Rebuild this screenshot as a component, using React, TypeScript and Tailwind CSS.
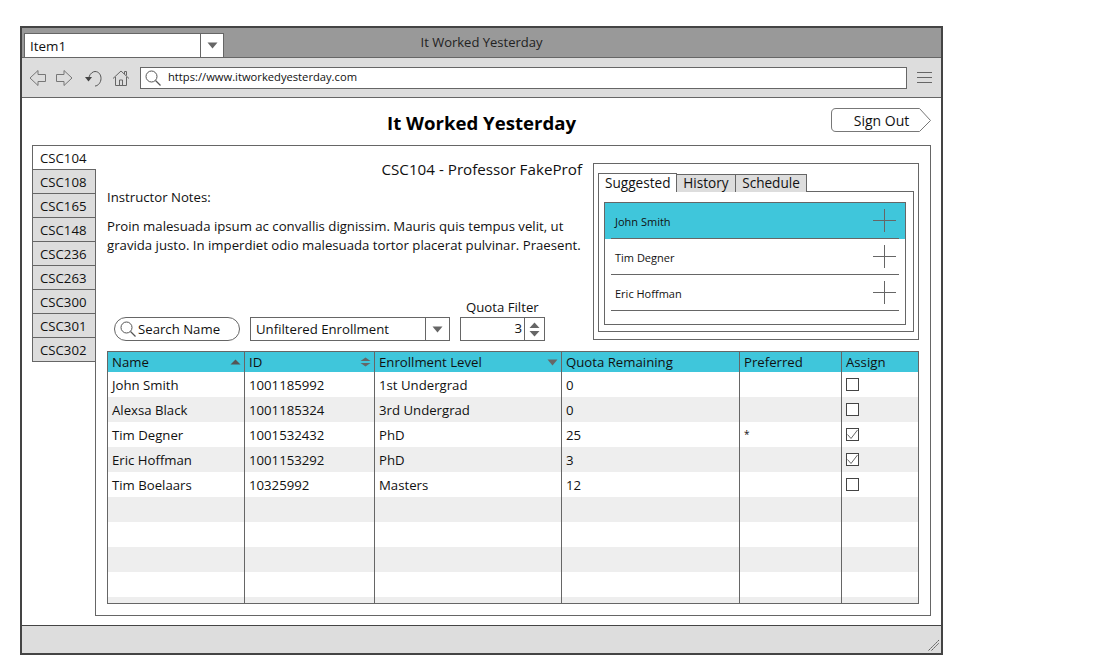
const cols = ["w-[137px]", "w-[130px]", "w-[187px]", "w-[178px]", "w-[102px]", "w-[76px]"];
type Row = [string, string, string, string, string, "" | "on" | "off"];
const rows: Row[] = [
  ["John Smith", "1001185992", "1st Undergrad", "0", "", "off"],
  ["Alexsa Black", "1001185324", "3rd Undergrad", "0", "", "off"],
  ["Tim Degner", "1001532432", "PhD", "25", "*", "on"],
  ["Eric Hoffman", "1001153292", "PhD", "3", "", "on"],
  ["Tim Boelaars", "10325992", "Masters", "12", "", "off"],
  ["", "", "", "", "", ""],
  ["", "", "", "", "", ""],
  ["", "", "", "", "", ""],
  ["", "", "", "", "", ""],
  ["", "", "", "", "", ""],
];
const courses = ["CSC108", "CSC165", "CSC148", "CSC236", "CSC263", "CSC300", "CSC301", "CSC302"];

function Caret({ className = "" }: { className?: string }) {
  return (
    <svg width="11" height="7" viewBox="0 0 11 7" className={className}>
      <path d="M0.5 0.5H10.5L5.5 6.5Z" fill="#666" />
    </svg>
  );
}

function Spinner() {
  return (
    <svg width="11" height="15" viewBox="0 0 11 15">
      <path d="M5.5 0.5L10.5 6H0.5Z" fill="#666" />
      <path d="M0.5 9H10.5L5.5 14.5Z" fill="#666" />
    </svg>
  );
}

function Plus() {
  return (
    <svg width="23" height="23" viewBox="0 0 23 23" className="shrink-0">
      <path d="M0 11.5H23M11.5 0V23" stroke="#666" strokeWidth="1" />
    </svg>
  );
}

function Check({ on }: { on: boolean }) {
  return (
    <svg width="13" height="13" viewBox="0 0 13 13" className="block">
      <rect x="0.5" y="0.5" width="12" height="12" fill="#fff" stroke="#444" />
      {on && <path d="M1.5 6.5L5 10.5L11.5 2" fill="none" stroke="#666" strokeWidth="1" />}
    </svg>
  );
}

function Glass({ size = 16 }: { size?: number }) {
  return (
    <svg width={size} height={size} viewBox="0 0 16 16" className="shrink-0">
      <circle cx="6.5" cy="6.5" r="5.5" fill="none" stroke="#555" />
      <path d="M10.5 10.5L15.5 15.5" stroke="#555" strokeWidth="1.2" />
    </svg>
  );
}

function NavIcons() {
  return (
    <div className="flex items-center ml-[7px] w-[111px] shrink-0">
      <svg width="18" height="18" viewBox="0 0 18 18" className="mr-[8px]">
        <path d="M1 9L9 1.5V5.5H16.5V12.5H9V16.5Z" fill="none" stroke="#777" />
      </svg>
      <svg width="18" height="18" viewBox="0 0 18 18" className="mr-[11px]">
        <path d="M17 9L9 1.5V5.5H1.5V12.5H9V16.5Z" fill="none" stroke="#777" />
      </svg>
      <svg width="18" height="18" viewBox="0 0 18 18" className="mr-[10px]">
        <path d="M5 8C6 4.5 9 2.5 11 2.5C15 2.5 17 6 17 9.5C17 13.5 14 17 11 17" fill="none" stroke="#555" />
        <path d="M1 8H8L4.5 12.5Z" fill="#444" />
      </svg>
      <svg width="18" height="18" viewBox="0 0 18 18">
        <path d="M1 9.5L9 2L17 9.5M3.5 8V16.5H14.5V8M7.5 16.5V11H10.5V16.5M12.5 5V2.5H14.5V6.5" fill="none" stroke="#666" />
      </svg>
    </div>
  );
}

function Cell({ w, last, children, cls = "" }: { w: string; last?: boolean; children?: React.ReactNode; cls?: string }) {
  return (
    <div className={`${w} shrink-0 h-full flex items-center pl-[4px] ${last ? "" : "border-r border-[#666]"} ${cls}`}>
      {children}
    </div>
  );
}

function Table() {
  const heads: [string, React.ReactNode][] = [
    ["Name", <svg key="a" width="11" height="6" viewBox="0 0 11 6" className="ml-auto mr-[3px]"><path d="M0.5 5.5H10.5L5.5 0.5Z" fill="#555" /></svg>],
    ["ID", <span key="b" className="ml-auto mr-[3px] flex"><svg width="11" height="10" viewBox="0 0 11 10"><path d="M0.5 4L5.5 0.5L10.5 4Z M0.5 6H10.5L5.5 9.5Z" fill="#666" /></svg></span>],
    ["Enrollment Level", <Caret key="c" className="ml-auto mr-[3px]" />],
    ["Quota Remaining", null],
    ["Preferred", null],
    ["Assign", null],
  ];
  return (
    <div className="mt-[10px] w-[812px] h-[253px] border border-[#666] overflow-hidden shrink-0">
      <div className="flex h-[20px] bg-[#3fc6db] text-[#111]">
        {heads.map(([h, icon], i) => (
          <Cell key={h} w={cols[i]} last={i === 5}>
            <span className="mt-[2px]">{h}</span>
            {icon}
          </Cell>
        ))}
      </div>
      {rows.map((r, ri) => (
        <div key={ri} className={`flex h-[25px] ${ri % 2 ? "bg-[#eee]" : "bg-white"}`}>
          {r.slice(0, 5).map((c, i) => (
            <Cell key={i} w={cols[i]} cls={c === "*" ? "pb-[2px] text-[10px]" : "pt-[2px]"}>{c}</Cell>
          ))}
          <Cell w={cols[5]} last>
            {r[5] && <Check on={r[5] === "on"} />}
          </Cell>
        </div>
      ))}
    </div>
  );
}

function Suggested() {
  const people = ["John Smith", "Tim Degner", "Eric Hoffman"];
  return (
    <div className="w-[326px] h-[177px] border border-[#666] pt-[9px] px-[4px] shrink-0 mt-[17px] ml-[10px]">
      <div className="flex h-[19px] items-end text-[13.6px]">
        <div className="h-[19px] w-[79px] flex items-center pl-[6px] relative z-10 bg-white border-l border-t border-[#666] border-r">Suggested</div>
        <div className="h-[18px] w-[59px] flex items-center justify-center pb-[2px] bg-[#ddd] border-t border-r border-[#666]">History</div>
        <div className="h-[18px] w-[71px] flex items-center justify-center pb-[2px] bg-[#ddd] border-t border-r border-[#666]">Schedule</div>
      </div>
      <div className="w-[316px] h-[141px] border border-[#666] -mt-px p-[5px] pt-[10px]">
        <div className="h-[123px] w-[302px] border border-[#666]">
          {people.map((p, i) => (
            <div key={p} className={`relative h-[36px] flex items-center justify-between pl-[10px] pr-[9px] text-[11px] ${i === 0 ? "bg-[#3fc6db]" : ""}`}>
              <span className="text-[#111] mt-[1px]">{p}</span>
              <span className="mb-[2px]"><Plus /></span>
              <span className="absolute left-[6px] right-[6px] bottom-0 h-px bg-[#666]" />
            </div>
          ))}
        </div>
      </div>
    </div>
  );
}

export default function App() {
  return (
    <div className="w-[1100px] h-[655px] bg-white pt-[26px] pl-[20px] overflow-hidden text-[13.2px] leading-none text-[#111] [font-family:'Open_Sans','Liberation_Sans',sans-serif]">
      <div className="w-[923px] h-[629px] border-2 border-[#444] flex flex-col">
        <div className="h-[29px] bg-[#999] relative flex items-end pl-[2px] shrink-0">
          <div className="w-[200px] h-[24px] bg-white border-r border-t border-l border-[#666] flex items-center">
            <span className="pl-[5px] pt-[2px] flex-1 text-[13.4px]">Item1</span>
            <span className="w-[23px] h-full border-l border-[#666] flex items-center justify-center"><Caret /></span>
          </div>
          <div className="absolute left-0 right-0 top-[8px] text-center text-[13px] text-[#222]">It Worked Yesterday</div>
        </div>
        <div className="h-[41px] bg-[#ddd] border-t border-b border-[#666] flex items-center shrink-0">
          <NavIcons />
          <div className="w-[767px] h-[22px] bg-white border border-[#666] flex items-center pl-[4px] text-[11.2px]">
            <Glass />
            <span className="ml-[7px] mb-[2px]">https://www.itworkedyesterday.com</span>
          </div>
          <div className="ml-[10px] flex flex-col gap-[4px] w-[15px]">
            <span className="h-px bg-[#666]" /><span className="h-px bg-[#666]" /><span className="h-px bg-[#666]" />
          </div>
        </div>
        <div className="flex-1 flex flex-col pl-[10px] min-h-0">
          <div className="h-[47px] flex items-start relative shrink-0">
            <div className="absolute left-[-10px] right-0 top-[13px] text-center text-[18.6px] font-bold leading-[24px] text-black">It Worked Yesterday</div>
            <div className="ml-[799px] mt-[10px] w-[101px] h-[25px] relative flex items-center justify-center">
              <svg width="101" height="25" viewBox="0 0 101 25" className="absolute inset-0">
                <path d="M5 0.5H88.5L99.5 12.5L88.5 23.5H5Q0.5 23.5 0.5 19V5Q0.5 0.5 5 0.5Z" fill="#fff" stroke="#777" />
              </svg>
              <span className="relative text-[14px]">Sign Out</span>
            </div>
          </div>
          <div className="flex items-start">
            <div className="w-[64px] shrink-0 flex flex-col relative z-10">
              <div className="h-[24px] bg-white border-l border-t border-[#666] flex items-center pl-[7px] pt-[2px]">CSC104</div>
              {courses.map((c) => (
                <div key={c} className="h-[24px] bg-[#ddd] border border-b-0 border-[#666] flex items-center pl-[7px] pt-[2px] last:h-[25px] last:border-b">{c}</div>
              ))}
            </div>
            <div className="w-[836px] h-[471px] -ml-px border border-[#666] pl-[11px] flex flex-col">
              <div className="flex h-[195px] shrink-0">
                <div className="w-[476px] shrink-0 flex flex-col">
                  <div className="text-right text-[15.2px] mt-[16px] pr-[1px]">CSC104 - Professor FakeProf</div>
                  <div className="mt-[14px]">Instructor Notes:</div>
                  <div className="mt-[13px] leading-[19px] whitespace-nowrap">
                    <div>Proin malesuada ipsum ac convallis dignissim. Mauris quis tempus velit, ut</div>
                    <div>gravida justo. In imperdiet odio malesuada tortor placerat pulvinar. Praesent.</div>
                  </div>
                </div>
                <Suggested />
              </div>
              <div className="flex items-end h-[0px] shrink-0 relative">
                <div className="ml-[7px] w-[126px] h-[24px] border border-[#666] rounded-full flex items-center pl-[5px] shrink-0">
                  <Glass />
                  <span className="ml-[2px] mt-[2px]">Search Name</span>
                </div>
                <div className="ml-[10px] w-[200px] h-[24px] border border-[#666] flex items-center shrink-0">
                  <span className="flex-1 pl-[5px] mt-[2px]">Unfiltered Enrollment</span>
                  <span className="w-[24px] h-full border-l border-[#666] flex items-center justify-center"><Caret /></span>
                </div>
                <div className="ml-[10px] w-[85px] h-[24px] border border-[#666] flex items-center shrink-0 relative">
                  <span className="absolute -top-[17px] left-[5px] whitespace-nowrap">Quota Filter</span>
                  <span className="flex-1 text-right pr-[2px]">3</span>
                  <span className="w-[20px] h-full border-l border-[#666] flex items-center justify-center"><Spinner /></span>
                </div>
              </div>
              <Table />
            </div>
          </div>
        </div>
        <div className="h-[28px] bg-[#ddd] border-t border-[#444] relative shrink-0">
          <svg width="14" height="14" viewBox="0 0 14 14" className="absolute right-[2px] bottom-[1px]">
            <path d="M3.5 12.5L14 2M6.5 12.5L14 5" stroke="#555" strokeWidth="1" strokeDasharray="2 0.7" />
          </svg>
        </div>
      </div>
    </div>
  );
}
